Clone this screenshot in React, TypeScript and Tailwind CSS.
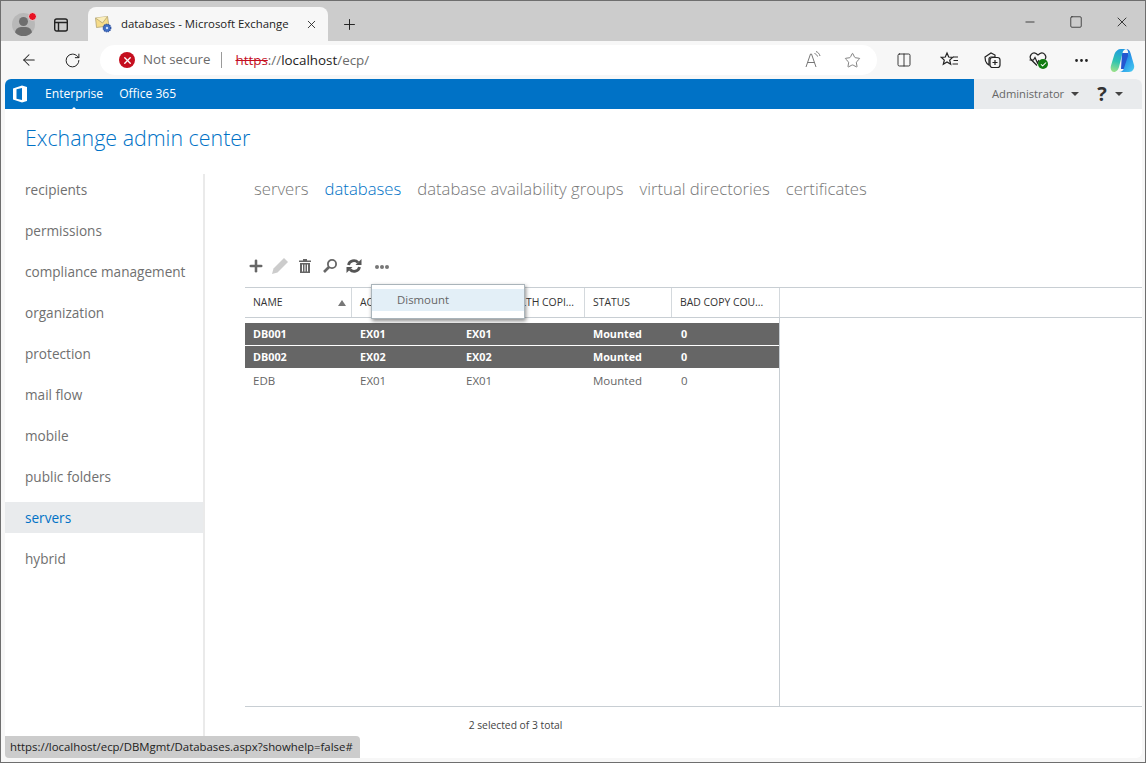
import { ArrowLeft, RotateCw, Star, Columns2, Plus, X, Minus, Square, MoreHorizontal, Check } from "lucide-react";

const font = { fontFamily: '"Open Sans", "Noto Sans", sans-serif' };

const navItems = [
  "recipients",
  "permissions",
  "compliance management",
  "organization",
  "protection",
  "mail flow",
  "mobile",
  "public folders",
  "servers",
  "hybrid",
];

const tabs = ["servers", "databases", "database availability groups", "virtual directories", "certificates"];

const rows = [
  { name: "DB001", a: "EX01", b: "EX01", status: "Mounted", bad: "0", selected: true },
  { name: "DB002", a: "EX02", b: "EX02", status: "Mounted", bad: "0", selected: true },
  { name: "EDB", a: "EX01", b: "EX01", status: "Mounted", bad: "0", selected: false },
];

function BrowserChrome() {
  return (
    <div className="shrink-0">
      <div className="h-[40px] bg-[#cccccc] flex relative">
        <div className="w-[87px] flex items-center pl-[11px] pt-[7px] gap-[18px]">
          <div className="relative w-[23px] h-[23px] rounded-full bg-[#b8b8b8] overflow-hidden shrink-0">
            <div className="absolute left-[7px] top-[4px] w-[9px] h-[9px] rounded-full bg-[#6e6e6e]" />
            <div className="absolute left-[3px] top-[14px] w-[17px] h-[12px] rounded-full bg-[#6e6e6e]" />
          </div>
          <svg width="16" height="16" viewBox="0 0 16 16" className="shrink-0" fill="none" stroke="#222" strokeWidth="1.4">
            <rect x="1.7" y="2" width="12.6" height="12" rx="2" />
            <path d="M1.7 5.500h12.600M5.500 5.500V14" />
          </svg>
        </div>
        <div className="absolute left-[27px] top-[11px] w-[9px] h-[9px] rounded-full bg-[#e81123] border border-[#dddddd]" />
        <div className="w-[240px] h-[34px] mt-[6px] bg-[#f7f7f7] rounded-t-[8px] flex items-center pl-[7px] pr-[10px]">
          <svg width="17" height="17" viewBox="0 0 17 17" className="shrink-0">
            <path d="M0.500 2 L12.500 0.500 L14 10 L1.500 11.500Z" fill="#f6dc8a" stroke="#a89a6a" strokeWidth="0.7" />
            <path d="M0.500 2 L7.500 7 L12.500 0.500" fill="#fbeebb" stroke="#a89a6a" strokeWidth="0.7" />
            <circle cx="12" cy="12" r="3.800" fill="#3f6fc4" stroke="#24499b" strokeWidth="1.200" strokeDasharray="1.200 0.800" />
            <circle cx="12" cy="12" r="1.200" fill="#cfe0fa" />
          </svg>
          <span className="ml-[9px] text-[11.4px] text-[#222] whitespace-nowrap">databases - Microsoft Exchange</span>
          <X size={13} strokeWidth={1.6} className="ml-auto text-[#222]" />
        </div>
        <div className="ml-[13px] mt-[6px] h-[34px] flex items-center">
          <Plus size={17} strokeWidth={1.4} className="text-[#222]" />
        </div>
        <div className="ml-auto flex items-center pt-[1px] pr-[15px] text-[#222] h-[40px]">
          <Minus size={14} strokeWidth={1.4} />
          <Square size={14} strokeWidth={1.3} className="ml-[32px]" />
          <X size={16} strokeWidth={1.3} className="ml-[31px]" />
        </div>
      </div>
      <div className="h-[38px] bg-[#f7f7f7] flex items-center">
        <ArrowLeft size={18} strokeWidth={1.4} className="ml-[19px] text-[#222]" />
        <RotateCw size={17} strokeWidth={1.4} className="ml-[26px] text-[#222]" />
        <div className="ml-[19px] w-[777px] h-[30px] bg-white rounded-full flex items-center">
          <div className="ml-[19px] w-[16px] h-[16px] rounded-full bg-[#c50f1f] flex items-center justify-center">
            <X size={11} strokeWidth={3} className="text-white" />
          </div>
          <span className="ml-[8px] text-[13.3px] text-[#6b6b6b] whitespace-nowrap">Not secure</span>
          <div className="ml-[11px] w-px h-[16px] bg-[#9a9a9a]" />
          <span className="ml-[13px] text-[13.4px] whitespace-nowrap text-[#222]">
            <span className="text-[#c50f1f] line-through">https</span>
            <span className="text-[#6b6b6b]">://</span>localhost<span className="text-[#6b6b6b]">/ecp/</span>
          </span>
          <svg width="18" height="18" viewBox="0 0 18 18" className="ml-auto" fill="none" stroke="#777777" strokeWidth="1">
            <path d="M2 16L6.500 3h1L12 16M3.500 11.500h7" />
            <path d="M10.500 2.500c1.500.5 2.500 1.500 3 3M12 0.500c2 .8 3.500 2.300 4 4.500" />
          </svg>
          <Star size={17} strokeWidth={1.2} className="ml-[22px] mr-[16px] text-[#6b6b6b]" />
        </div>
        <Columns2 size={16} strokeWidth={1.3} className="ml-[19px] text-[#222]" />
        <svg width="20" height="18" viewBox="0 0 20 18" className="ml-[28px]" fill="none" stroke="#222" strokeWidth="1.2">
          <path d="M7 2l1.700 4 4 .3-3 2.800 1 4.200L7 11l-3.700 2.300 1-4.200-3-2.800 4-.3z" />
          <path d="M13 6h5M13.500 9.500h4.500M12.500 13h5.500" />
        </svg>
        <svg width="20" height="20" viewBox="0 0 20 20" className="ml-[23px]" fill="none" stroke="#222" strokeWidth="1.2">
          <path d="M2 7l6-4 4 2v2H8a2 2 0 0 0-2 2v6l-2-1.500C2.500 12 2 10 2 7z" />
          <rect x="7" y="7.500" width="10" height="10" rx="2.500" />
          <path d="M12 10v5M9.500 12.500h5" />
        </svg>
        <div className="ml-[25px] relative w-[20px] h-[20px]">
          <svg width="20" height="20" viewBox="0 0 20 20" fill="none" stroke="#222" strokeWidth="1.2">
            <path d="M9 15.500L3 9.500C0.500 6 4.500 1.500 8 3.500L10 5l2-1.500c3.500-2 7.500 2.500 5 6" />
            <path d="M1.500 10h4l1.500-2.500L9.500 13l1.500-3" />
          </svg>
          <div className="absolute left-[10px] top-[9px] w-[10px] h-[10px] rounded-full bg-[#107c10] flex items-center justify-center">
            <Check size={7} strokeWidth={3.500} className="text-white" />
          </div>
        </div>
        <MoreHorizontal size={17} strokeWidth={2} className="ml-[25px] text-[#222]" />
        <svg width="25" height="25" viewBox="0 0 25 25" className="ml-[20px]">
          <defs>
            <linearGradient id="copilotLeft" x1="0.5" y1="0" x2="0.3" y2="1">
              <stop offset="0" stopColor="#1f9ae0" />
              <stop offset="0.550" stopColor="#30c4b0" />
              <stop offset="1" stopColor="#9ae08a" />
            </linearGradient>
            <linearGradient id="copilotRight" x1="0.2" y1="0" x2="1" y2="1">
              <stop offset="0" stopColor="#1a5fd0" />
              <stop offset="0.500" stopColor="#2a9aea" />
              <stop offset="1" stopColor="#4cd0f0" />
            </linearGradient>
          </defs>
          <path d="M12 5h6l2 8-3 8h-6z" fill="#2456d0" />
          <path d="M16 1c2.500 0 3.800 1.500 4.500 4L24 17c1 3.500-1.500 7-5 7H9c3 0 4.500-2 5-4l4-12c.6-2.500 0-7-2-7z" fill="url(#copilotRight)" />
          <path d="M11 1h6c-3 0-4 2-4.500 4L9 19c-.6 2.500-2.500 5-5 5-2.500 0-4-3.500-3-6.500L4.500 6C5.500 3 8 1 11 1z" fill="url(#copilotLeft)" />
        </svg>
      </div>
    </div>
  );
}

function Toolbar() {
  return (
    <div className="h-[37px] shrink-0 pl-[2px] pb-[6px] flex items-center">
      <Plus size={18} strokeWidth={3.400} className="text-[#666666]" />
      <svg width="18" height="18" viewBox="0 0 18 18" className="ml-[6px]">
        <path d="M13 1l4 4L6.500 15.500 1 17l1.500-5.500z" fill="#cccccc" />
      </svg>
      <svg width="16" height="16" viewBox="0 0 16 16" fill="#666666" className="ml-[8px]">
        <path d="M6 1h4v1.500h4V4H2V2.500h4zM3 5h10v10H3zm2 1.500v7h1v-7zm2.500 0v7h1v-7zm2.500 0v7h1v-7z" fillRule="evenodd" />
      </svg>
      <svg width="16" height="16" viewBox="0 0 16 16" fill="none" stroke="#666666" strokeWidth="1.800" className="ml-[9px]">
        <circle cx="10" cy="6" r="4.100" />
        <path d="M7 9l-5 5" strokeWidth="2.600" />
      </svg>
      <svg width="16" height="16" viewBox="0 0 16 16" fill="none" stroke="#555555" strokeWidth="2.800" className="ml-[8px]">
        <path d="M2.500 7A5.500 5.500 0 0 1 12 4.500" />
        <path d="M13.500 9A5.500 5.500 0 0 1 4 11.500" />
        <path d="M9.500 7h6V1z" fill="#555555" stroke="none" />
        <path d="M6.500 9h-6v6z" fill="#555555" stroke="none" />
      </svg>
      <div className="ml-[13px] flex gap-[1px] mt-[3px]">
        <span className="w-[4px] h-[4px] rounded-full bg-[#777777]" />
        <span className="w-[4px] h-[4px] rounded-full bg-[#777777]" />
        <span className="w-[4px] h-[4px] rounded-full bg-[#777777]" />
      </div>
    </div>
  );
}

function DatabaseTable() {
  return (
    <div className="flex-1 flex flex-col min-h-0 relative">
      <div className="h-[31px] shrink-0 flex border-y border-[#c8ced3] text-[10.400px] text-[#333333] uppercase">
        <div className="w-[107px] border-r border-[#d4d9dd] pl-[8px] flex items-center justify-between pr-[5px]">
          <span>Name</span>
          <span className="w-0 h-0 border-x-[4px] border-x-transparent border-b-[6px] border-b-[#777777]" />
        </div>
        <div className="w-[106px] pl-[8px] flex items-center">Active</div>
        <div className="w-[127px] border-r border-[#d4d9dd] flex items-center justify-end pr-[10px]">Health copi...</div>
        <div className="w-[87px] border-r border-[#d4d9dd] pl-[8px] flex items-center">Status</div>
        <div className="w-[108px] border-r border-[#d4d9dd] pl-[8px] flex items-center">Bad copy cou...</div>
      </div>
      <div className="flex-1 flex min-h-0">
        <div className="w-[535px] shrink-0 border-r border-[#c8ced3] pt-[5px]">
          {rows.map((row) => (
            <div
              key={row.name}
              className={`h-[23px] pt-[1px] flex items-center border-b border-white ${
                row.selected ? "bg-[#666666] text-white font-bold text-[10.800px]" : "text-[#666666] text-[11.500px]"
              }`}
            >
              <span className="w-[107px] pl-[8px]">{row.name}</span>
              <span className="w-[106px] pl-[8px]">{row.a}</span>
              <span className="w-[127px] pl-[8px]">{row.b}</span>
              <span className="w-[87px] pl-[8px]">{row.status}</span>
              <span className="pl-[9px]">{row.bad}</span>
            </div>
          ))}
        </div>
      </div>
      <div className="h-[52px] shrink-0 border-t border-[#c8ced3] flex items-center justify-center pr-[356px] pb-[14px] text-[10.300px] text-[#444444]">
        2 selected of 3 total
      </div>
      <div className="absolute left-[126px] top-[-3px] w-[154px] h-[35px] bg-white border border-[#aab4ba] shadow-[1px_2px_4px_rgba(0,0,0,0.45)] pt-[4px]">
        <div className="h-[22px] bg-[#e3eff7] pl-[25px] flex items-center text-[11.400px] text-[#666666]">Dismount</div>
      </div>
    </div>
  );
}

export default function App() {
  return (
    <div className="w-[1146px] h-[763px] flex flex-col overflow-hidden border border-[#6e6e6e] bg-[#f7f7f7] relative" style={font}>
      <BrowserChrome />
      <div className="flex-1 ml-[4px] mr-[3px] mb-[4px] bg-white rounded-[6px] overflow-hidden flex flex-col min-h-0">
        <div className="h-[30px] shrink-0 flex">
          <div className="flex-1 bg-[#0072c6] flex items-center text-white text-[12.100px]">
            <svg width="16" height="18" viewBox="0 0 16 18" className="ml-[7px] shrink-0" fill="white">
              <path d="M1 3.500L10 0.500l5 1.500v14l-5 1.500-9-3zM10 3L4.500 4.300v9.500L10 15z" fillRule="evenodd" />
            </svg>
            <span className="ml-[17px] relative">
              Enterprise
              <span className="absolute left-[25px] top-[22px] w-0 h-0 border-x-[4px] border-x-transparent border-b-[4px] border-b-white" />
            </span>
            <span className="ml-[16px]">Office 365</span>
          </div>
          <div className="w-[168px] bg-[#e9ebed] flex items-center text-[11.200px] text-[#666666]">
            <span className="ml-[18px]">Administrator</span>
            <span className="ml-[7px] w-0 h-0 border-x-[4px] border-x-transparent border-t-[4px] border-t-[#444444]" />
            <span className="ml-[18px] text-[20px] font-bold text-[#333333] leading-none">?</span>
            <span className="ml-[8px] w-0 h-0 border-x-[4px] border-x-transparent border-t-[4px] border-t-[#444444]" />
          </div>
        </div>
        <div className="h-[65px] shrink-0 pl-[20px] pt-[14px] text-[21.400px] font-light leading-[30px] text-[#0072c6]">Exchange admin center</div>
        <div className="flex-1 flex min-h-0">
          <div className="w-[200px] shrink-0 border-r-2 border-[#eaeaea] flex flex-col gap-[10px]">
            {navItems.map((item) => (
              <div
                key={item}
                className={`h-[31px] pt-[2px] shrink-0 pl-[20px] flex items-center text-[13.600px] ${
                  item === "servers" ? "bg-[#e9ebed] text-[#0072c6]" : "text-[#707070]"
                }`}
              >
                {item}
              </div>
            ))}
          </div>
          <div className="flex-1 pl-[40px] flex flex-col min-h-0">
            <div className="h-[76px] shrink-0 pt-[2px] pl-[9px] flex gap-[16px] text-[16.700px] font-light leading-[25px] text-[#777777]">
              {tabs.map((t) => (
                <span key={t} className={t === "databases" ? "text-[#0072c6]" : ""}>
                  {t}
                </span>
              ))}
            </div>
            <Toolbar />
            <DatabaseTable />
          </div>
        </div>
      </div>
      <div className="absolute left-[4px] bottom-[4px] h-[22px] bg-[#cccccc] rounded-tr-[4px] rounded-bl-[4px] pl-[5px] pr-[7px] flex items-center text-[11.400px] text-[#222222]">
        https://localhost/ecp/DBMgmt/Databases.aspx?showhelp=false#
      </div>
    </div>
  );
}
